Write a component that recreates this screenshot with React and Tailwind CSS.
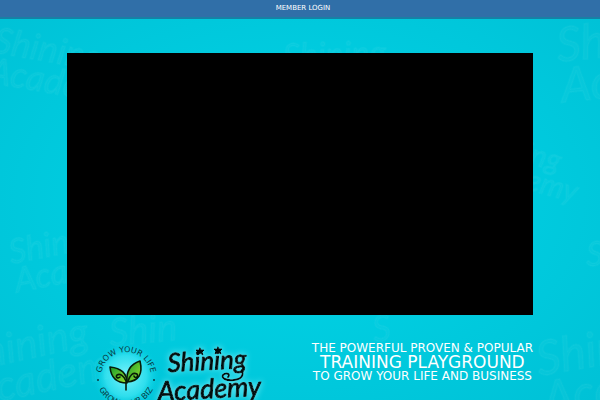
const watermarks = [
  { x: -8, y: 52, size: 36, angle: 10, words: ["Shining", "Acade"] },
  { x: 283, y: 68, size: 34, angle: -2, words: ["Shining"] },
  { x: 558, y: 62, size: 48, angle: -6, words: ["Sh", "Ac"] },
  { x: 470, y: 148, size: 30, angle: 15, words: ["Shining", "Academy"] },
  { x: 11, y: 264, size: 34, angle: -11, words: ["Shin", "Aca"] },
  { x: 586, y: 266, size: 34, angle: 0, words: ["S"] },
  { x: -34, y: 372, size: 42, angle: -12, words: ["Shining", "Academ"] },
  { x: 110, y: 346, size: 38, angle: -5, words: ["Shin"] },
  { x: 374, y: 342, size: 36, angle: -8, words: ["S"] },
  { x: 539, y: 376, size: 48, angle: -10, words: ["Shin", "Aca"] },
];

function Pattern() {
  return (
    <svg
      className="absolute inset-0 h-full w-full"
      viewBox="0 0 600 400"
      preserveAspectRatio="xMidYMin slice"
      aria-hidden="true"
    >
      <g
        fill="#7deaf2"
        fillOpacity="0.08"
        stroke="#7deaf2"
        strokeOpacity="0.06"
        strokeWidth="2"
        strokeLinejoin="round"
        className="font-['Lato',sans-serif] italic"
      >
        {watermarks.map((mark, i) => (
          <g
            key={i}
            transform={`translate(${mark.x} ${mark.y}) rotate(${mark.angle})`}
            fontSize={mark.size}
          >
            {mark.words.map((word, line) => (
              <text key={word} y={line * mark.size * 0.85}>
                {word}
              </text>
            ))}
          </g>
        ))}
      </g>
    </svg>
  );
}

function Logo() {
  return (
    <svg
      className="block h-[80px] w-[180px]"
      viewBox="0 0 180 80"
      role="img"
      aria-label="Shining Academy"
    >
      <defs>
        <radialGradient id="glow">
          <stop offset="0" stopColor="#8ff8ff" stopOpacity="0.9" />
          <stop offset="0.6" stopColor="#4deefa" stopOpacity="0.6" />
          <stop offset="1" stopColor="#00d2e6" stopOpacity="0" />
        </radialGradient>
        <linearGradient id="leaf" x1="0" x2="1" y1="0" y2="1">
          <stop offset="0" stopColor="#159b2c" />
          <stop offset="1" stopColor="#9be22d" />
        </linearGradient>
        <filter id="halo" x="-20%" y="-30%" width="140%" height="160%">
          <feDropShadow dx="0" dy="0" stdDeviation="3" floodColor="#9ffaff" floodOpacity="0.8" />
        </filter>
        <path id="ringTop" d="M 9 38 A 25 25 0 0 1 59 38" />
        <path id="ringBottom" d="M 4 37 A 30 30 0 0 0 64 37" />
      </defs>

      <circle cx="34" cy="37" r="34" fill="url(#glow)" />

      {/* ring lettering */}
      <g fontSize="8" fill="#083d45" className="font-['DejaVu_Sans',sans-serif]">
        <text textAnchor="middle">
          <textPath href="#ringTop" startOffset="50%">GROW YOUR LIFE</textPath>
        </text>
        <text textAnchor="middle">
          <textPath href="#ringBottom" startOffset="50%">GROW YOUR BIZ</textPath>
        </text>
        <circle cx="6" cy="41" r="1" />
        <circle cx="62" cy="41" r="1" />
      </g>

      {/* leaves */}
      <g stroke="#071b08" strokeWidth="1.6" strokeLinecap="round" strokeLinejoin="round">
        <path d="M35 44 C25 44 19 39 18 28 C28 29 35 33 35 44Z" fill="url(#leaf)" />
        <path d="M35 43 C34 32 39 25 48 22 C51 35 47 42 35 43Z" fill="url(#leaf)" />
        <path d="M34 51 V42 C32 37 28 34 25 36 C23 38 26 40 28 38" fill="none" />
        <path d="M36 42 C38 36 41 33 45 35 C47 38 43 40 42 37" fill="none" />
      </g>

      {/* wordmark */}
      <g
        fill="#050b0d"
        stroke="#050b0d"
        strokeWidth="1"
        strokeLinecap="round"
        strokeLinejoin="round"
        filter="url(#halo)"
        className="font-['Lato',sans-serif] italic"
      >
        <text x="76" y="33" fontSize="26" transform="rotate(-3 76 33)">Shining</text>
        <text x="66" y="62" fontSize="27" transform="rotate(-3 66 62)">Academy</text>
        <path
          d="M150 31 C152 37 149 40 142 41 C134 42 129 39 131 36 C134 33 139 35 136 38"
          fill="none"
          strokeWidth="2"
        />
        <path d="M108 9l1 2 3 0-2 2 1 3-3-2-3 2 1-3-2-2 3 0z" />
        <path d="M126 8l1 2 3 0-2 2 1 3-3-2-3 2 1-3-2-2 3 0z" />
      </g>
    </svg>
  );
}

export default function App() {
  return (
    <div className="relative flex h-screen flex-col overflow-hidden bg-[#00c5d9] bg-radial from-[#00d6e8] to-[#00c1d6] font-['DejaVu_Sans',sans-serif] text-white">
      <Pattern />

      <header className="relative flex h-[19px] shrink-0 items-center justify-center border-b-2 border-[#1681a6] bg-[#306fa8] pl-1.5">
        <a href="#login" className="text-[7px] leading-none">
          MEMBER LOGIN
        </a>
      </header>

      <main className="relative mx-auto w-full max-w-[466px] pt-[34px]">
        <div className="aspect-video w-full bg-black" />

        <div className="flex items-start justify-between pt-6 pl-[25px]">
          <Logo />
          <h1 className="pt-[2px] text-center text-[12px] leading-[14px] whitespace-nowrap">
            <span className="block">THE POWERFUL PROVEN &amp; POPULAR</span>
            <span className="block text-[17px] leading-[14px]">TRAINING PLAYGROUND</span>
            <span className="block">TO GROW YOUR LIFE AND BUSINESS</span>
          </h1>
        </div>
      </main>
    </div>
  );
}
